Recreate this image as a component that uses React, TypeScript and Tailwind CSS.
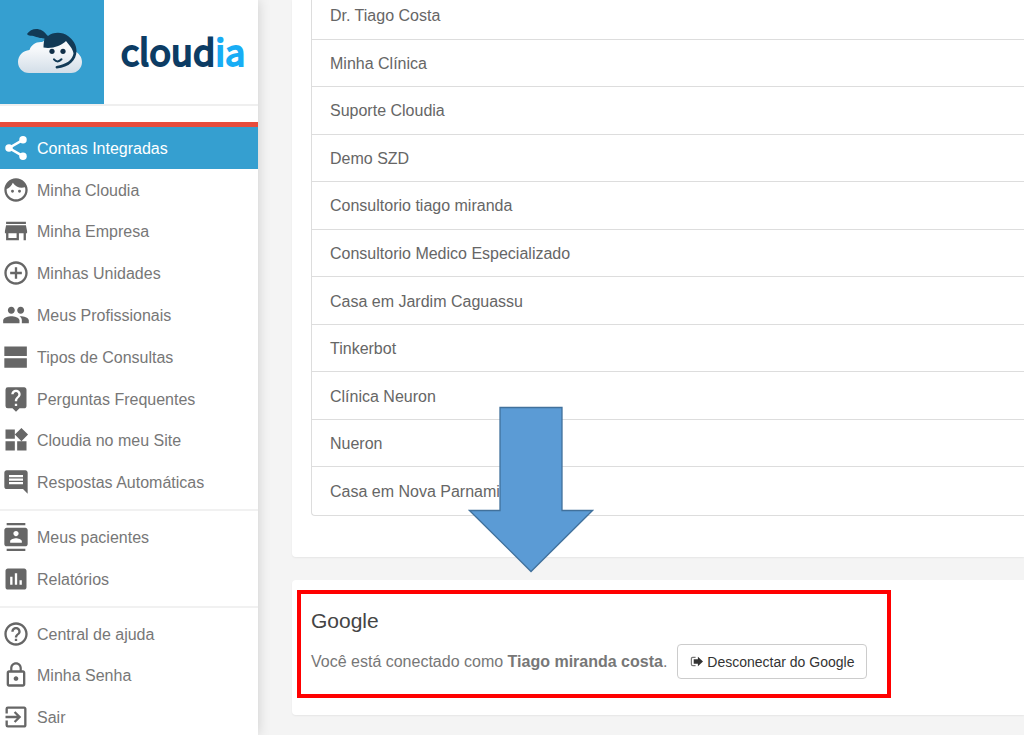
import React from 'react';
import {
  MdAddCircleOutline,
  MdAssessment,
  MdComment,
  MdContacts,
  MdExitToApp,
  MdFace,
  MdHelpOutline,
  MdLiveHelp,
  MdLockOutline,
  MdPeople,
  MdWidgets,
} from 'react-icons/md';

interface IconProps {
  size?: number;
  className?: string;
}

interface MenuItem {
  label: string;
  icon: React.ComponentType<IconProps>;
  active?: boolean;
}

const ShareIcon: React.FC<IconProps> = ({ size, className }) => (
  <svg viewBox="0 0 24 24" width={size} height={size} fill="currentColor" className={className} aria-hidden="true">
    <path d="M18 5L6 12L18 19" fill="none" stroke="currentColor" strokeWidth="2.200" />
    <circle cx="18" cy="5" r="3.2" />
    <circle cx="6" cy="12" r="3.2" />
    <circle cx="18" cy="19" r="3.2" />
  </svg>
);

const StoreIcon: React.FC<IconProps> = ({ size, className }) => (
  <svg viewBox="0 0 24 24" width={size} height={size} fill="currentColor" className={className} aria-hidden="true">
    <path d="M20.500 4H3.500v2h17V4zm1 10v-2l-1-5h-17l-1 5v2h1v6h11v-6h4v6h2v-6h1zm-9 4h-7v-4h7v4z" />
  </svg>
);

const RowsIcon: React.FC<IconProps> = ({ size, className }) => (
  <svg viewBox="0 0 24 24" width={size} height={size} fill="currentColor" className={className} aria-hidden="true">
    <path d="M2 3h19.300v8.200H2zM2 13h19.300v8.200H2z" />
  </svg>
);

const LogOutIcon: React.FC<IconProps> = ({ size, className }) => (
  <svg viewBox="0 0 14 14" width={size} height={size} className={className} aria-hidden="true">
    <path d="M6 2.500H3Q1.500 2.500 1.500 4V10Q1.500 11.500 3 11.500H6" fill="none" stroke="#777" strokeWidth="1.300" />
    <path d="M8.500 2L14 7L8.500 12V9.300H4V4.700H8.500Z" fill="currentColor" />
  </svg>
);

const mainMenu: MenuItem[] = [
  { label: 'Contas Integradas', icon: ShareIcon, active: true },
  { label: 'Minha Cloudia', icon: MdFace },
  { label: 'Minha Empresa', icon: StoreIcon },
  { label: 'Minhas Unidades', icon: MdAddCircleOutline },
  { label: 'Meus Profissionais', icon: MdPeople },
  { label: 'Tipos de Consultas', icon: RowsIcon },
  { label: 'Perguntas Frequentes', icon: MdLiveHelp },
  { label: 'Cloudia no meu Site', icon: MdWidgets },
  { label: 'Respostas Automáticas', icon: MdComment },
];

const patientMenu: MenuItem[] = [
  { label: 'Meus pacientes', icon: MdContacts },
  { label: 'Relatórios', icon: MdAssessment },
];

const accountMenu: MenuItem[] = [
  { label: 'Central de ajuda', icon: MdHelpOutline },
  { label: 'Minha Senha', icon: MdLockOutline },
  { label: 'Sair', icon: MdExitToApp },
];

const pages = [
  'Dr. Tiago Costa',
  'Minha Clínica',
  'Suporte Cloudia',
  'Demo SZD',
  'Consultorio tiago miranda',
  'Consultorio Medico Especializado',
  'Casa em Jardim Caguassu',
  'Tinkerbot',
  'Clínica Neuron',
  'Nueron',
  'Casa em Nova Parnamirim',
];

const CloudLogo: React.FC = () => (
  <svg viewBox="0 0 104 104" className="size-[104px] shrink-0 bg-[#359fd0]" aria-hidden="true">
    <defs>
      <linearGradient id="cloud" x1="0" y1="0" x2="0" y2="1">
        <stop offset="0.3" stopColor="#f7f9fb" />
        <stop offset="1" stopColor="#d3dee8" />
      </linearGradient>
    </defs>
    <path
      d="M29 73C22.500 73 18 68 18 62C18 55.500 23 50.500 29.500 50C31 45 36 41.500 42 42L50 38H68L74 51C79 53 82 57 82 62C82 68 77.500 73 71 73Z"
      fill="url(#cloud)"
    />
    <path
      d="M27 34C30 29 37 27.500 42 30.500C45 32 46 34.500 48 36C53 32 62 31.500 68 36C73 39.500 76.500 45 76.500 51C76.500 60 69 67.500 57 68.500C55.500 68.600 55 66.500 56.500 66C66 64.500 72.500 60 73.500 53.500C73 49 69 45 66 41C61 46 52 49 43.500 47.500C43.500 44 44 41 44.500 38.500C39 38.500 36 36.500 32 35.800C30 35.500 28 36 27 34Z"
      fill="#123a56"
    />
    <circle cx="52" cy="51.300" r="2.600" fill="#102f47" />
    <circle cx="63" cy="51.300" r="2.600" fill="#102f47" />
    <path d="M54 59.300Q57.500 63.500 61.500 59.300" fill="none" stroke="#123a56" strokeWidth="2" strokeLinecap="round" />
  </svg>
);

const MenuGroup: React.FC<{ items: MenuItem[]; className: string }> = ({ items, className }) => (
  <ul className={`grid auto-rows-fr ${className}`}>
    {items.map(({ label, icon: Icon, active }) => (
      <li key={label} className="flex">
        <a
          href="#"
          aria-current={active ? 'page' : undefined}
          className={`flex w-full items-center gap-[7px] pl-[2px] ${
            active ? 'bg-[#359fd0] text-white' : 'text-[#777]'
          }`}
        >
          <Icon size={28} className={active ? 'text-white' : 'text-[#666]'} />
          <span className="pt-[2px]">{label}</span>
        </a>
      </li>
    ))}
  </ul>
);

const Sidebar: React.FC = () => (
  <aside className="z-10 w-[258px] shrink-0 bg-white shadow-[0_0_12px_rgba(0,0,0,0.16)]">
    <div className="flex items-center border-b-2 border-[#efefef]">
      <CloudLogo />
      <span className="flex-1 pb-1 pl-1 text-center font-['Noto_Sans_CJK_SC',sans-serif] text-[36px] leading-[48px] font-normal text-[#0c3c64] [-webkit-text-stroke:2px_currentColor]">
        cloud<span className="text-[#18adf5]">ia</span>
      </span>
    </div>
    <nav className="mt-4 border-t-[5px] border-[#e74c3c]">
      <MenuGroup items={mainMenu} className="min-h-[376px]" />
      <hr className="mt-[6px] mb-[5px] border-t-2 border-[#f1f1f1]" />
      <MenuGroup items={patientMenu} className="min-h-[84px]" />
      <hr className="mt-[6px] mb-[5px] border-t-2 border-[#f1f1f1]" />
      <MenuGroup items={accountMenu} className="min-h-[125px]" />
    </nav>
  </aside>
);

const App: React.FC = () => {
  return (
    <div className="flex h-screen overflow-hidden bg-[#f4f4f4] font-['Liberation_Sans',Arial,sans-serif] text-base text-[#666]">
      <Sidebar />

      <main className="flex min-w-0 flex-1 flex-col gap-[23px] pl-[34px]">
        <section className="relative rounded-bl bg-white pb-[41px] pl-[19px] shadow-[0_1px_2px_rgba(0,0,0,0.06)]">
          <ul className="-mt-2 grid min-h-[524px] auto-rows-fr rounded-bl border-b border-l border-[#ddd]">
            {pages.map((page) => (
              <li key={page} className="flex items-center border-b border-[#ddd] pt-[2px] pl-[18px] last:border-b-0">
                {page}
              </li>
            ))}
          </ul>
          <svg
            viewBox="0 0 126 167"
            className="absolute top-[406px] left-[176px] z-10 h-[167px] w-[126px]"
            aria-hidden="true"
          >
            <path
              d="M32 1.500H94V104.500H124.500L63 165.500L1.500 104.500H32Z"
              fill="#5b9bd5"
              stroke="#41719c"
              strokeWidth="1.300"
            />
          </svg>
        </section>

        <section className="relative rounded-l bg-white px-[19px] pt-[29px] pb-9 shadow-[0_1px_2px_rgba(0,0,0,0.06)]">
          <h2 className="text-[21px] leading-6 text-[#444]">Google</h2>
          <div className="mt-[11px] flex items-center gap-[10px] whitespace-nowrap">
            <p className="text-[#777]">
              Você está conectado como <strong>Tiago miranda costa</strong>.
            </p>
            <button
              type="button"
              className="flex h-[35px] items-center gap-1 rounded border border-[#ccc] bg-white px-3 text-sm text-[#333]"
            >
              <LogOutIcon size={13} />
              Desconectar do Google
            </button>
          </div>
          <div className="pointer-events-none absolute top-[10px] left-[5px] h-[108px] w-[594px] border-4 border-[#f00]" />
        </section>
      </main>
    </div>
  );
};

export default App;
